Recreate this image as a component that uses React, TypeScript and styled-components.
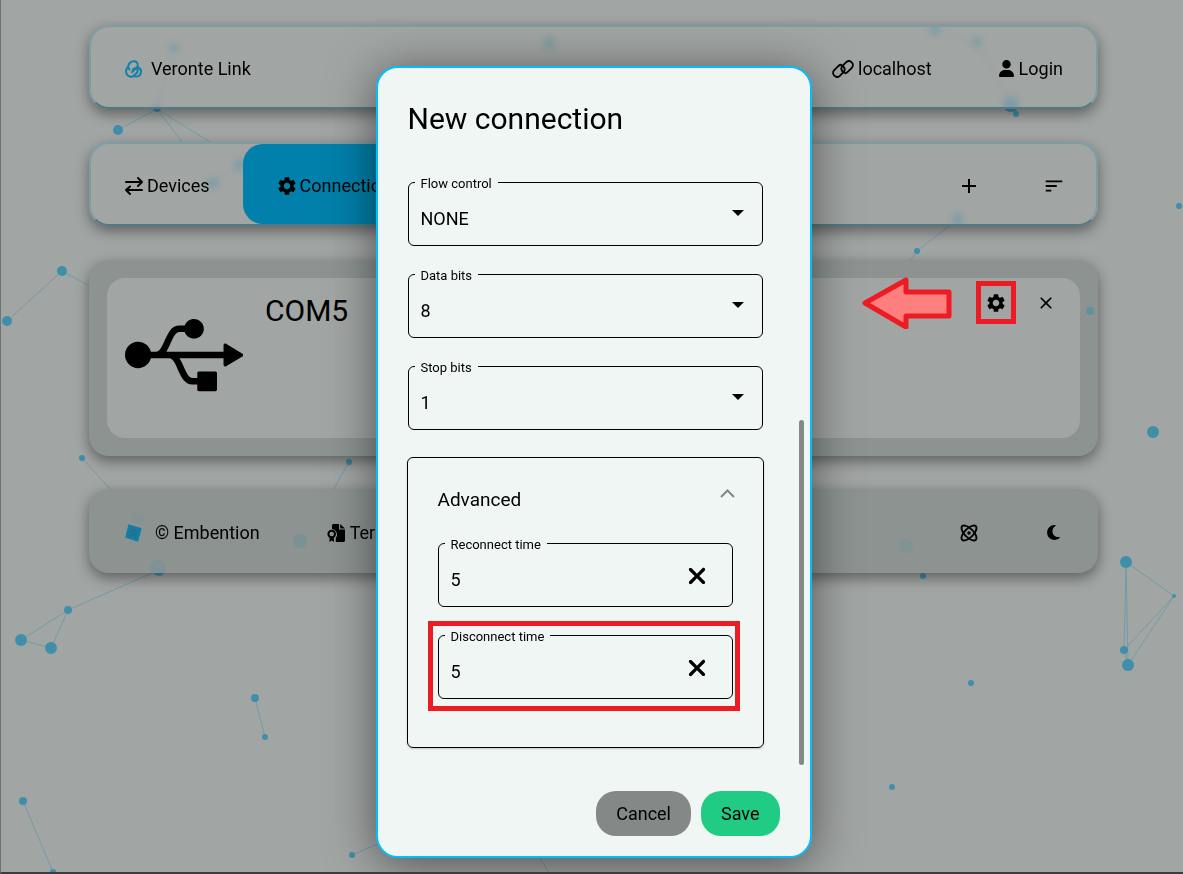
import React from 'react';
import styled, { createGlobalStyle } from 'styled-components';
import { FaMoon, FaUser, FaUsb, FaXmark } from 'react-icons/fa6';
import { MdAdd, MdClose, MdSettings, MdSort } from 'react-icons/md';
import { Atom } from 'lucide-react';

const GlobalStyle = createGlobalStyle`
  * { box-sizing: border-box; }
  body {
    margin: 0;
    background: #a1a5a3;
    color: #000;
    font: 400 18px/24px Roboto, "Liberation Sans", sans-serif;
  }
  button, input, select { font: inherit; color: inherit; }
`;

const Page = styled.div`
  position: relative;
  min-height: 100vh;
  padding: 25px 85px 0 88px;
  border-left: 1px solid #6f7472;
  border-bottom: 2px solid #393e3d;
  overflow: hidden;
`;

const Sky = styled.svg`
  position: absolute;
  top: 0;
  left: -1px;
  width: calc(100% + 1px);
  height: calc(100% + 2px);
`;

const Stack = styled.div`
  position: relative;
  display: flex;
  flex-direction: column;
  gap: 33px;
`;

const Bar = styled.div<{ $plain?: boolean }>`
  display: flex;
  align-items: stretch;
  justify-content: space-between;
  height: 84px;
  overflow: hidden;
  border: 2px solid;
  border-color: ${(p) =>
    p.$plain ? 'transparent' : '#7c9ca6 #7c9ca6 #547883 #7c9ca6'};
  border-radius: 20px;
  background: ${(p) => (p.$plain ? '#8c9391' : 'rgba(161, 165, 163, 0.65)')};
  backdrop-filter: blur(3px);
  box-shadow: 0 5px 14px rgba(0, 0, 0, 0.42);
`;

const Group = styled.div`
  display: flex;
  align-items: stretch;
`;

const Brand = styled.a<{ $gap: number }>`
  display: flex;
  align-items: center;
  gap: ${(p) => p.$gap}px;
  padding: 3px 34px 0;
  color: inherit;
  text-decoration: none;
`;

const BarButton = styled.button<{ $active?: boolean }>`
  display: flex;
  align-items: center;
  gap: ${(p) => (p.$active ? 2 : 4)}px;
  padding: 3px 33px 0;
  border: 0;
  border-radius: 20px;
  background: ${(p) => (p.$active ? '#0080aa' : 'transparent')};
  white-space: nowrap;

  &:first-child { padding-left: 34px; }
`;

const BarIconButton = styled(BarButton)`
  justify-content: center;
  width: 85px;
  padding: 3px 0 0;

  &:first-child { padding-left: 0; }
`;

const Devices = styled.section`
  margin-top: 1px;
  padding: 18px;
  border-radius: 20px;
  background: #8c9391;
  box-shadow: 0 5px 14px rgba(0, 0, 0, 0.42);
`;

const DeviceCard = styled.article`
  display: flex;
  gap: 22px;
  height: 160px;
  padding: 0 18px;
  border-radius: 18px;
  background: #a1a5a3;
`;

const UsbMark = styled.div`
  display: flex;
  align-items: center;
  padding-bottom: 6px;
  font-size: 118px;
`;

const DeviceName = styled.h2`
  flex: 1;
  margin: 15px 0 0;
  font-size: 30px;
  line-height: 36px;
  font-weight: 400;
`;

const DeviceActions = styled.div`
  display: flex;
  align-items: flex-start;
  gap: 14px;
  padding-top: 3px;
`;

const IconButton = styled.button<{ $marked?: boolean }>`
  display: grid;
  place-items: center;
  width: ${(p) => (p.$marked ? 40 : 32)}px;
  height: 43px;
  padding: 0;
  border: ${(p) => (p.$marked ? '5px solid #ed1c24' : '0')};
  background: transparent;
`;

const Arrow = styled.svg`
  margin: -4px 10px 0 0;
`;

const Overlay = styled.div`
  position: absolute;
  inset: 0;
  display: flex;
  align-items: flex-start;
  justify-content: center;
  padding: 66px 18px 16px 21px;
`;

const Modal = styled.form`
  width: 436px;
  max-width: 100%;
  padding: 31px 30px 20px;
  border: 2px solid #00bfff;
  border-radius: 22px;
  background: #f0f6f4;
  box-shadow: 0 6px 48px rgba(0, 0, 0, 0.5);
`;

const Title = styled.h1`
  margin: 0;
  font-size: 30px;
  line-height: 40px;
  font-weight: 400;
`;

const Fields = styled.div`
  position: relative;
  display: flex;
  flex-direction: column;
  gap: 19px;
  margin-top: 34px;
  padding-right: 17px;
`;

const ScrollThumb = styled.div`
  position: absolute;
  right: -24px;
  bottom: -17px;
  width: 5px;
  height: 345px;
  border-radius: 3px;
  background: #848987;
`;

const FieldRow = styled.div<{ $marked?: boolean }>`
  position: relative;

  &::after {
    content: ${(p) => (p.$marked ? '""' : 'none')};
    position: absolute;
    inset: -5px -7px -12px -10px;
    border: 5px solid #ed1c24;
    pointer-events: none;
  }
`;

const FieldBox = styled.fieldset`
  min-width: 0;
  height: 73px;
  margin: 0;
  padding: 0;
  border: 1px solid #000;
  border-radius: 6px;
`;

const Legend = styled.legend`
  margin-left: 6px;
  padding: 3px 6px 0;
  font-size: 13px;
  line-height: 16px;
`;

const Control = styled.div`
  display: grid;
  grid-template-columns: 1fr auto;
  align-items: center;
  height: 53px;
`;

const Select = styled.select`
  grid-area: 1 / 1 / 2 / 3;
  width: 100%;
  height: 53px;
  padding: 0 12px;
  border: 0;
  appearance: none;
  background: transparent;
`;

const Caret = styled.svg`
  grid-area: 1 / 2 / 2 / 3;
  margin: 0 18px 11px 0;
  pointer-events: none;
`;

const TextInput = styled.input`
  width: 100%;
  min-width: 0;
  height: 53px;
  padding: 0 12px;
  border: 0;
  background: transparent;
`;

const ClearButton = styled.button`
  display: grid;
  margin: 0 22px 7px 0;
  padding: 0;
  border: 0;
  background: transparent;
  font-size: 26px;
`;

const Panel = styled.section`
  display: flex;
  flex-direction: column;
  gap: 19px;
  margin: 8px -1px 0;
  padding: 30px 30px 48px;
  border: 1px solid #000;
  border-radius: 6px;
  box-shadow: 0 1px 2px rgba(0, 0, 0, 0.2);
`;

const PanelToggle = styled.button`
  display: flex;
  align-items: center;
  justify-content: space-between;
  margin-right: -2px;
  padding: 0 0 3px;
  border: 0;
  background: transparent;
  font-size: 19px;

  svg { margin-bottom: 14px; }
`;

const Actions = styled.div`
  display: flex;
  justify-content: flex-end;
  gap: 10px;
  margin-top: 43px;
`;

const Action = styled.button<{ $tone: string }>`
  height: 45px;
  padding: 0 20px;
  border: 0;
  border-radius: 20px;
  background: ${(p) => p.$tone};
`;

const dots: [number, number, number][] = [
  [118, 130, 5], [157, 108, 4], [174, 48, 5], [213, 183, 6], [240, 165, 6],
  [549, 43, 6], [935, 31, 5], [977, 42, 5], [1011, 104, 8], [1016, 114, 3],
  [917, 251, 3], [958, 219, 6], [1179, 206, 3], [62, 271, 5], [7, 321, 5],
  [1153, 432, 6], [82, 458, 3], [349, 462, 3], [159, 570, 6], [923, 576, 3],
  [1126, 562, 6], [1174, 596, 2], [1124, 650, 4], [1128, 665, 6],
  [971, 683, 3], [892, 787, 3], [68, 610, 4], [21, 640, 6], [51, 648, 6],
  [255, 698, 4], [265, 737, 3], [23, 801, 4], [53, 872, 3], [352, 855, 3],
];

const lines: [number, number, number, number][] = [
  [118, 130, 157, 109], [174, 48, 157, 109], [157, 109, 182, 142],
  [157, 109, 210, 142], [213, 183, 240, 165], [935, 31, 977, 42],
  [977, 42, 1011, 104], [1011, 104, 1016, 114], [917, 251, 958, 219],
  [62, 271, 7, 321], [62, 271, 110, 297], [917, 251, 900, 276],
  [82, 458, 112, 491], [1126, 562, 1174, 596], [1126, 562, 1124, 650],
  [1126, 562, 1128, 665], [1174, 596, 1124, 650], [1174, 596, 1128, 665],
  [1124, 650, 1128, 665], [68, 610, 21, 640], [68, 610, 51, 648],
  [21, 640, 51, 648], [68, 610, 159, 570], [255, 698, 265, 737],
  [23, 801, 53, 872], [352, 855, 380, 843], [538, 855, 549, 873],
  [349, 462, 333, 490], [906, 545, 923, 576],
];

const hazyDots: [number, number, number, number][] = [
  [1090, 311, 4, 0.5], [300, 541, 7, 0.2], [138, 518, 6, 0.08],
  [906, 546, 7, 0.15], [158, 568, 8, 0.15],
];

function Constellation() {
  return (
    <Sky viewBox="0 0 1183 874" preserveAspectRatio="xMidYMid slice" aria-hidden="true">
      <g stroke="#5c97aa" strokeWidth="1" opacity="0.65">
        {lines.map(([x1, y1, x2, y2], i) => (
          <line key={i} x1={x1} y1={y1} x2={x2} y2={y2} />
        ))}
      </g>
      <g fill="#3f8fab">
        {dots.map(([cx, cy, r], i) => (
          <circle key={i} cx={cx} cy={cy} r={r} />
        ))}
      </g>
    </Sky>
  );
}

function Haze() {
  return (
    <Sky viewBox="0 0 1183 874" preserveAspectRatio="xMidYMid slice" aria-hidden="true" pointerEvents="none">
      {hazyDots.map(([cx, cy, r, o], i) => (
        <circle key={i} cx={cx} cy={cy} r={r} fill="#3a8eab" opacity={o} />
      ))}
      <path d="M0.5 0V49" stroke="#393e3d" strokeWidth="1" />
    </Sky>
  );
}

function VeronteLogo() {
  return (
    <svg width="17" height="18" viewBox="0 0 17 18" fill="none" stroke="#0f82aa" strokeWidth="2" strokeLinecap="round">
      <path d="M4.500 9.500C2.600 7.500 3 4.600 5 2.700 7 .8 10.300.7 11.800 2.300c1.500 1.700 1 4.200-.7 5.800L7 12" />
      <path d="M2.800 7.200C1.200 9 .6 11.400 1.500 13.600c1.200 3 4.800 4 7.400 2l2.800-2.500c1.400-1.500 1.200-3.300.2-4.200-1.200-.9-2.700-.5-3.900.5" />
      <path d="M12.600 7.200c2.500 1 3.900 3.400 3.200 5.900-.8 2.600-3.300 4-6 3.300" />
    </svg>
  );
}

function ChainIcon() {
  return (
    <svg width="22" height="18" viewBox="-1 2 26 20" fill="none" stroke="#000" strokeWidth="2.200" strokeLinecap="round">
      <path d="M12.500 15.500c-2.700-1.500-3.300-4.800-1.300-7l4.600-4.600c1.900-1.700 4.700-1.600 6.500.2s1.800 4.700.1 6.500L17 15.900c-1.200 1.100-2.800 1.200-3.800.400" />
      <path d="M11.500 8.500c2.700 1.500 3.300 4.800 1.300 7l-4.600 4.600c-1.900 1.700-4.700 1.600-6.500-.2s-1.800-4.700-.1-6.500L7 8.100c1.200-1.100 2.800-1.200 3.800-.400" />
    </svg>
  );
}

function SwapIcon() {
  return (
    <svg width="18" height="18" viewBox="0 0 18 18" fill="none" stroke="#000" strokeWidth="2" strokeLinecap="round" strokeLinejoin="round">
      <path d="M1 5h16M13 1l4 4-4 4M17 13H1M5 9.500 1 13l4 4" />
    </svg>
  );
}

function EmbentionLogo() {
  return (
    <svg width="17" height="18" viewBox="0 0 17 18">
      <path d="M3.500.2 16.700 4.200 13.100 17.700.2 13.400Z" fill="#0f7fa7" />
      <path d="M6 4.500 9 3.800M4.500 8.500c2-1.500 4-1 5.500-2.500M3.500 11.500c3-1 5 1 8.500-2.500M9 14c1.200-.4 2-1.200 2.500-2.200" stroke="#3c6773" strokeWidth="1.200" fill="none" />
    </svg>
  );
}

function TermsIcon() {
  return (
    <svg width="19" height="18" viewBox="0 0 19 18">
      <path d="M5 5V1.500C5 .7 5.700 0 6.500 0H12v5.500h6V16.500c0 .8-.7 1.500-1.500 1.500H8.800v-4.200C11.300 11 10 6 5 5ZM13.200 0 18 4.500h-4.800Z" />
      <circle cx="4.700" cy="10" r="3.300" fill="none" stroke="#000" strokeWidth="2" />
      <path d="M2.500 13.500h4.400V18l-2.200-1.400L2.500 18Z" />
    </svg>
  );
}

function SelectField({ id, label, value }: { id: string; label: string; value: string }) {
  return (
    <FieldRow>
      <FieldBox>
        <Legend><label htmlFor={id}>{label}</label></Legend>
        <Control>
          <Select id={id} defaultValue={value}>
            <option>{value}</option>
          </Select>
          <Caret width="12" height="6" viewBox="0 0 12 6"><path d="M0 0h12L6 6Z" /></Caret>
        </Control>
      </FieldBox>
    </FieldRow>
  );
}

function TimeField({ id, label, marked }: { id: string; label: string; marked?: boolean }) {
  return (
    <FieldRow $marked={marked}>
      <FieldBox>
        <Legend><label htmlFor={id}>{label}</label></Legend>
        <Control>
          <TextInput id={id} defaultValue="5" />
          <ClearButton type="button" aria-label={`Clear ${label}`}><FaXmark /></ClearButton>
        </Control>
      </FieldBox>
    </FieldRow>
  );
}

export default function App() {
  return (
    <>
      <GlobalStyle />
      <Page>
        <Constellation />
        <Stack>
          <Bar as="header">
            <Brand href="#" $gap={9}><VeronteLogo />Veronte Link</Brand>
            <Group>
              <BarButton><ChainIcon />localhost</BarButton>
              <BarButton><FaUser size={17} />Login</BarButton>
            </Group>
          </Bar>
          <Bar as="nav">
            <Group>
              <BarButton><SwapIcon />Devices</BarButton>
              <BarButton $active><MdSettings size={22} />Connections</BarButton>
            </Group>
            <Group>
              <BarIconButton aria-label="Add"><MdAdd size={24} /></BarIconButton>
              <BarIconButton aria-label="Sort"><MdSort size={22} /></BarIconButton>
            </Group>
          </Bar>
          <Devices>
            <DeviceCard>
              <UsbMark><FaUsb /></UsbMark>
              <DeviceName>COM5</DeviceName>
              <DeviceActions>
                <Arrow width="90" height="52" viewBox="0 0 90 52" aria-hidden="true">
                  <path d="M3 26 44 3v12h43v24H44v11Z" fill="#ff7f7f" stroke="#ed1c24" strokeWidth="5" strokeLinejoin="round" />
                </Arrow>
                <IconButton $marked aria-label="Settings"><MdSettings size={22} /></IconButton>
                <IconButton aria-label="Remove"><MdClose size={20} /></IconButton>
              </DeviceActions>
            </DeviceCard>
          </Devices>
          <Bar as="footer" $plain>
            <Group>
              <Brand href="#" $gap={13}><EmbentionLogo />© Embention</Brand>
              <BarButton><TermsIcon />Terms</BarButton>
            </Group>
            <Group>
              <BarIconButton aria-label="Effects"><Atom size={20} strokeWidth={2.2} /></BarIconButton>
              <BarIconButton aria-label="Dark mode"><FaMoon size={17} /></BarIconButton>
            </Group>
          </Bar>
        </Stack>
        <Haze />
        <Overlay>
          <Modal role="dialog" aria-labelledby="dialog-title" onSubmit={(e) => e.preventDefault()}>
            <Title id="dialog-title">New connection</Title>
            <Fields>
              <SelectField id="flow" label="Flow control" value="NONE" />
              <SelectField id="data" label="Data bits" value="8" />
              <SelectField id="stop" label="Stop bits" value="1" />
              <Panel>
                <PanelToggle type="button" aria-expanded="true">
                  Advanced
                  <svg width="15" height="9" viewBox="0 0 15 9" fill="none" stroke="#848987" strokeWidth="2">
                    <path d="M1 8 7.500 1.500 14 8" />
                  </svg>
                </PanelToggle>
                <TimeField id="reconnect" label="Reconnect time" />
                <TimeField id="disconnect" label="Disconnect time" marked />
              </Panel>
              <ScrollThumb />
            </Fields>
            <Actions>
              <Action type="button" $tone="#848987">Cancel</Action>
              <Action type="submit" $tone="#20cc84">Save</Action>
            </Actions>
          </Modal>
        </Overlay>
      </Page>
    </>
  );
}
